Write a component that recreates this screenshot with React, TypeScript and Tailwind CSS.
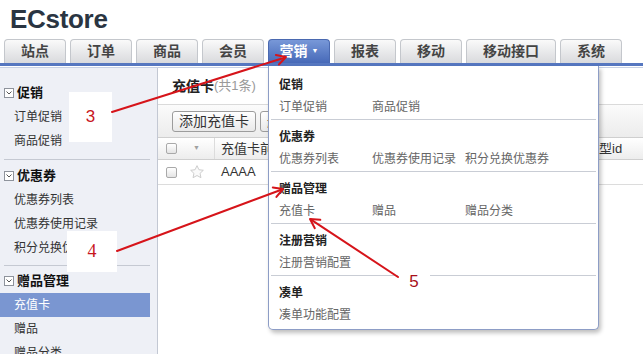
const tabs = [
  { label: '站点', w: 'w-[62px]' },
  { label: '订单', w: 'w-[62px]' },
  { label: '商品', w: 'w-[62px]' },
  { label: '会员', w: 'w-[62px]' },
  { label: '营销', w: 'w-[62px]', active: true },
  { label: '报表', w: 'w-[62px]' },
  { label: '移动', w: 'w-[62px]' },
  { label: '移动接口', w: 'w-[90px]' },
  { label: '系统', w: 'w-[62px]' },
]

const menu = [
  { title: '促销', items: ['订单促销', '商品促销'] },
  { title: '优惠券', items: ['优惠券列表', '优惠券使用记录', '积分兑换优惠券'] },
  { title: '赠品管理', items: ['充值卡', '赠品', '赠品分类'] },
  { title: '注册营销', items: ['注册营销配置'] },
  { title: '凑单', items: ['凑单功能配置'] },
]

function Toggle() {
  return (
    <span className="flex h-[10px] w-[10px] items-center justify-center border border-[#8e939c] bg-white">
      <svg width="6" height="4" viewBox="0 0 6 4">
        <path d="M0.5 0.5 L3 3 L5.5 0.5" fill="none" stroke="#555" strokeWidth="1" />
      </svg>
    </span>
  )
}

function SideHead({ label }: { label: string }) {
  return (
    <div className="flex h-[24px] items-center pl-[4px]">
      <Toggle />
      <span className="ml-[3px] text-[13px] font-bold text-[#111]">{label}</span>
    </div>
  )
}

function SideItem({ label, active }: { label: string; active?: boolean }) {
  return (
    <div
      className={
        active
          ? 'mr-[7px] h-[24px] bg-[#7a96d1] pl-[14px] text-[12px] leading-[24px] text-white'
          : 'h-[24px] pl-[14px] text-[12px] leading-[24px] text-[#333]'
      }
    >
      {label}
    </div>
  )
}

function Check() {
  return (
    <span className="block h-[11px] w-[11px] rounded-[2px] border border-[#a9a9a9] bg-linear-to-b from-white to-[#e4e4e4]" />
  )
}

export default function App() {
  return (
    <div className="relative h-[354px] w-[643px] overflow-hidden bg-white font-['Liberation_Sans','Noto_Sans_CJK_SC',sans-serif]">
      <div className="h-[39px] pl-[10px] pt-[4px] text-[26px] font-bold leading-[30px] tracking-[-0.3px] text-[#2a3542]">
        ECstore
      </div>

      <div className="flex h-[24px] gap-[4px] pl-[4px]">
        {tabs.map((t) => (
          <div
            key={t.label}
            className={[
              t.w,
              'flex items-center justify-center rounded-t-[4px] border border-b-0 text-[14px] font-bold',
              t.active
                ? 'border-[#4a69b0] bg-linear-to-b from-[#7898d8] to-[#4769b8] text-white'
                : 'border-[#c4c7cc] bg-linear-to-b from-[#fafafa] to-[#d9dadd] text-[#444]',
            ].join(' ')}
          >
            {t.label}
            {t.active ? <span className="ml-[4px] text-[7px] text-white">▼</span> : null}
          </div>
        ))}
      </div>
      <div className="h-[3px] bg-[#5677c0]" />
      <div className="h-[1px] bg-white" />
      <div className="h-[1px] bg-[#c8d1e4]" />

      <div className="flex h-[286px]">
        <div className="w-[158px] shrink-0 border-r border-[#c3c8d3] bg-[#eef0f6] pt-[13px]">
          <SideHead label="促销" />
          <SideItem label="订单促销" />
          <SideItem label="商品促销" />
          <div className="ml-[4px] mr-[7px] mt-[6px] h-[1px] bg-[#c5c9d2]" />
          <div className="pt-[4px]">
            <SideHead label="优惠券" />
            <SideItem label="优惠券列表" />
            <SideItem label="优惠券使用记录" />
            <SideItem label="积分兑换优惠券" />
          </div>
          <div className="ml-[4px] mr-[7px] mt-[5px] h-[1px] bg-[#c5c9d2]" />
          <div className="pt-[3px]">
            <SideHead label="赠品管理" />
            <SideItem label="充值卡" active />
            <SideItem label="赠品" />
            <SideItem label="赠品分类" />
          </div>
        </div>

        <div className="flex-1">
          <div className="flex h-[36px] items-center pl-[14px]">
            <span className="text-[14px] font-bold text-[#222]">充值卡</span>
            <span className="text-[13px] text-[#9a9a9a]">(共1条)</span>
          </div>
          <div className="flex h-[33px] items-center gap-[4px] border-t border-[#dadada] bg-linear-to-b from-[#fbfbfb] to-[#ececec] pl-[14px]">
            <button className="h-[21px] rounded-[3px] border border-[#9c9c9c] bg-linear-to-b from-white to-[#e9e9e9] px-[6px] text-[14px] leading-[19px] text-[#333]">
              添加充值卡
            </button>
            <button className="h-[21px] rounded-[3px] border border-[#9c9c9c] bg-linear-to-b from-white to-[#e9e9e9] px-[6px] text-[14px] leading-[19px] text-[#333]">
              删除
            </button>
          </div>
          <div className="flex h-[23px] items-center border-y border-[#cfcfcf] bg-linear-to-b from-white to-[#ededed] text-[13px] text-[#333]">
            <div className="w-[26px] pl-[8px]">
              <Check />
            </div>
            <div className="flex h-full w-[31px] items-center border-r border-[#dcdcdc] pl-[9px] text-[7px] text-[#a0a0a0]">▼</div>
            <div className="w-[352px] pl-[6px]">充值卡前缀</div>
            <div className="pl-[6px]">卡类型id</div>
          </div>
          <div className="flex h-[25px] items-center border-b border-[#dcdcdc] text-[13px] text-[#333]">
            <div className="w-[26px] pl-[8px]">
              <Check />
            </div>
            <div className="flex w-[31px] items-center pl-[5px]">
              <svg width="16" height="16" viewBox="0 0 24 24">
                <path
                  d="M12 2.5l2.9 6.1 6.6.8-4.9 4.6 1.3 6.5L12 17.3l-5.9 3.2 1.3-6.5-4.9-4.6 6.6-.8z"
                  fill="#fafafa"
                  stroke="#c9c9c9"
                  strokeWidth="1.4"
                  strokeLinejoin="round"
                />
              </svg>
            </div>
            <div className="pl-[6px]">AAAA</div>
          </div>
        </div>
      </div>

      <div className="absolute left-[268px] top-[66px] z-10 w-[331px] rounded-b-[5px] border border-t-0 border-[#8d9dc6] bg-white pb-[2px] shadow-[2px_3px_4px_rgba(0,0,0,0.25)]">
        {menu.map((s, i) => (
          <div key={s.title}>
            {i > 0 ? <div className="mx-[2px] h-[1px] bg-[#c9cdd5]" /> : null}
            <div className={i === 0 ? 'pl-[10px] pt-[8px]' : 'pl-[10px] pt-[6px]'}>
              <div className="h-[22px] text-[12px] font-bold leading-[22px] text-[#222]">{s.title}</div>
              <div className="flex h-[23px] text-[12px] leading-[23px] text-[#666]">
                {s.items.map((it) => (
                  <div key={it} className="w-[93px]">
                    {it}
                  </div>
                ))}
              </div>
            </div>
          </div>
        ))}
      </div>

      <div className="absolute left-[69px] top-[92px] z-20 flex h-[50px] w-[43px] items-center justify-center bg-white text-[17px] text-[#c8161d]">
        3
      </div>
      <div className="absolute left-[67px] top-[231px] z-20 flex h-[41px] w-[50px] items-center justify-center bg-white font-['Liberation_Serif',serif] text-[18px] text-[#c8161d]">
        4
      </div>
      <div className="absolute left-[398px] top-[269px] z-20 flex h-[26px] w-[32px] items-center justify-center bg-white text-[17px] text-[#a8101a]">
        5
      </div>

      <svg className="pointer-events-none absolute left-0 top-0 z-30" width="643" height="354">
        <g fill="none" stroke="#d6141a" strokeWidth="2" strokeLinecap="round" strokeLinejoin="round">
          <line x1="112" y1="112" x2="285" y2="57.5" />
          <polyline points="278.9,64.5 286,57 275.9,54.9" />
          <line x1="117" y1="251" x2="282" y2="189.5" />
          <polyline points="276.4,196.9 283,189 272.8,187.5" />
          <line x1="398" y1="277" x2="311" y2="219.6" />
          <polyline points="320.3,219.8 310,219 314.8,228.2" />
        </g>
      </svg>
    </div>
  )
}
